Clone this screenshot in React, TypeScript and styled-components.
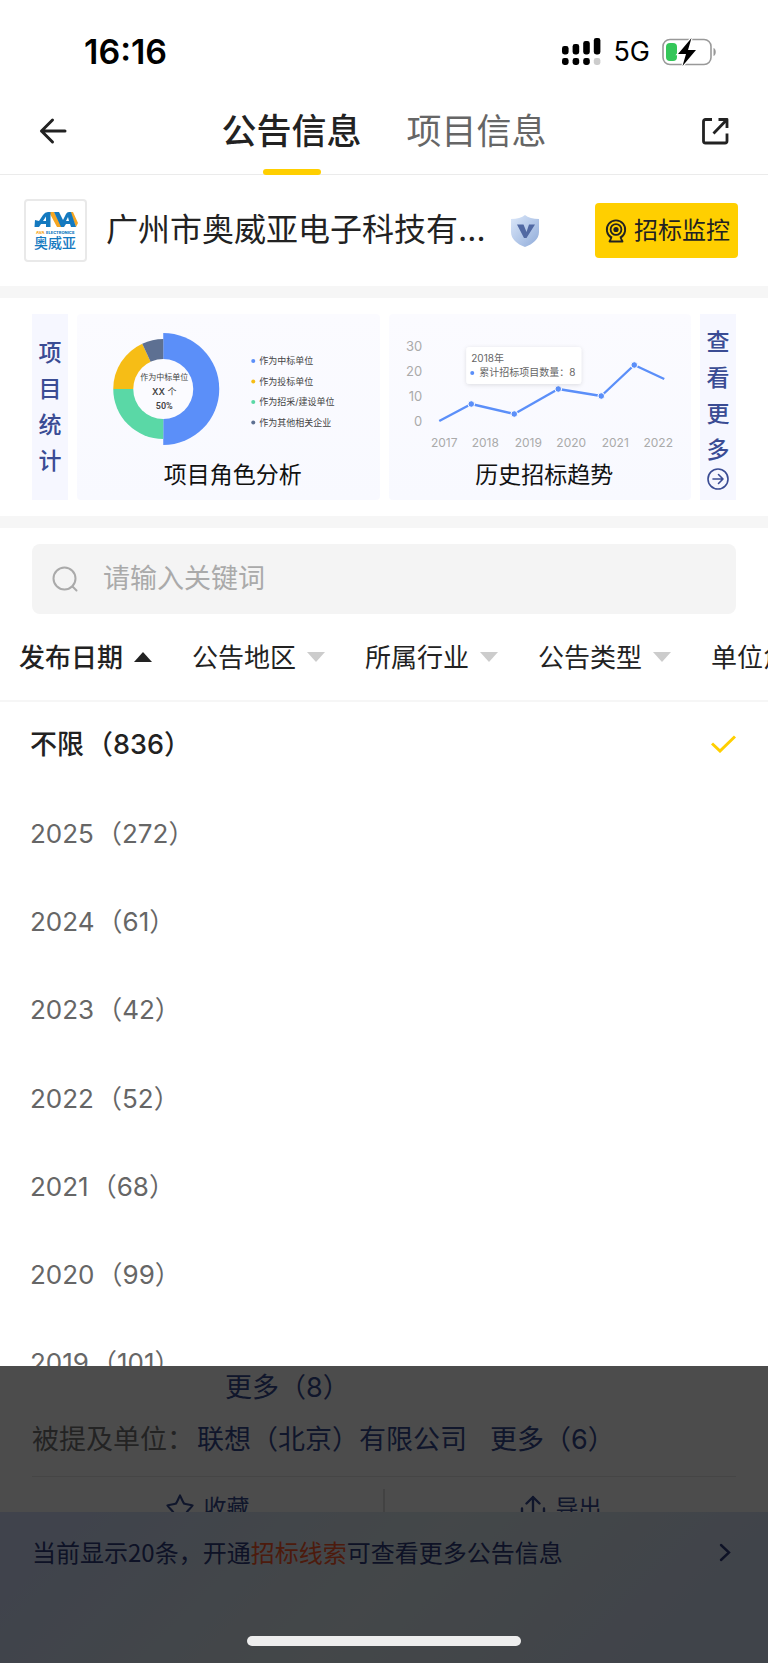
import React from "react";
import styled, { createGlobalStyle } from "styled-components";

const GlobalStyle = createGlobalStyle`
  *, *::before, *::after { box-sizing: border-box; }
  body {
    margin: 0;
    background: #fff;
    color: #222;
    font-family: Inter, "Noto Sans CJK SC", sans-serif;
  }
  button, input {
    font: inherit;
    color: inherit;
    border: 0;
    padding: 0;
    margin: 0;
    background: none;
  }
  button { cursor: pointer; }
  a { color: inherit; text-decoration: none; }
  svg { display: block; flex: none; }
`;

const Page = styled.div`
  display: flex;
  flex-direction: column;
  min-height: 100vh;
  overflow: hidden;
`;

const StatusBar = styled.div`
  display: flex;
  align-items: center;
  justify-content: space-between;
  height: 92px;
  padding: 12px 51px 0 84px;
  color: #000;
`;

const Clock = styled.time`
  font-size: 34px;
  font-weight: 600;
  line-height: 40px;
`;

const StatusIcons = styled.div`
  display: flex;
  align-items: center;
  gap: 12px;
  font-size: 27px;
  line-height: 32px;
`;

const NavBar = styled.header`
  display: flex;
  align-items: stretch;
  justify-content: space-between;
  height: 83px;
  padding: 0 37px;
  border-bottom: 1px solid #ebebeb;
`;

const IconButton = styled.button`
  display: flex;
  align-items: center;
  height: 78px;
`;

const Tabs = styled.nav`
  display: flex;
  gap: 45px;
`;

const Tab = styled.button<{ $active?: boolean }>`
  position: relative;
  height: 78px;
  font-size: 35px;
  line-height: 78px;
  font-weight: ${(p) => (p.$active ? 500 : 400)};
  color: ${(p) => (p.$active ? "#222" : "#666")};

  &::after {
    content: "";
    display: ${(p) => (p.$active ? "block" : "none")};
    position: absolute;
    left: 50%;
    bottom: -5px;
    width: 58px;
    height: 6px;
    margin-left: -28px;
    border-radius: 3px;
    background: #ffcf00;
  }
`;

const CompanyRow = styled.section`
  display: flex;
  align-items: center;
  height: 111px;
  padding: 0 30px 0 24px;
`;

const Logo = styled.div`
  flex: none;
  border: 2px solid #e9e9e9;
  border-radius: 4px;
`;

const CompanyName = styled.h1`
  flex: 1;
  max-width: 384px;
  margin: 0 21px 0 19px;
  padding-bottom: 2px;
  font-size: 32px;
  line-height: 44px;
  font-weight: 400;
  white-space: nowrap;
  overflow: hidden;
  text-overflow: ellipsis;
`;

const MonitorButton = styled.button`
  display: flex;
  align-items: center;
  gap: 7px;
  height: 55px;
  margin-left: auto;
  padding: 0 8px 0 10px;
  border-radius: 4px;
  background: #ffcf00;
  font-size: 24px;
  line-height: 52px;
  white-space: nowrap;
`;

const Band = styled.div`
  height: 12px;
  background: #f6f6f6;
`;

const Stats = styled.section`
  display: flex;
  gap: 9px;
  height: 218px;
  padding: 16px 32px;
`;

const SideColumn = styled.div`
  display: flex;
  flex-direction: column;
  align-items: center;
  justify-content: center;
  flex: none;
  width: 36px;
  padding: 0 6px;
  background: #f6f7ff;
  color: #3a4c94;
  font-size: 23px;
  font-weight: 500;
  line-height: 36px;
  text-align: center;
`;

const MoreLink = styled(SideColumn).attrs({ as: "a" })<{ href: string }>``;

const ChartCard = styled.figure`
  display: flex;
  flex-direction: column;
  flex: 1;
  min-width: 0;
  margin: 0;
  border-radius: 4px;
  background: linear-gradient(#fbfbff, #f8f9ff);

  svg { width: 100%; height: 140px; }
`;

const ChartTitle = styled.figcaption`
  padding-left: 9px;
  color: #111;
  font-size: 23px;
  line-height: 42px;
  text-align: center;
`;

const SearchBox = styled.label`
  display: flex;
  align-items: center;
  gap: 25px;
  height: 70px;
  margin: 16px 32px 0;
  padding: 0 20px;
  border-radius: 8px;
  background: #f4f4f4;
`;

const SearchInput = styled.input`
  flex: 1;
  min-width: 0;
  height: 40px;
  padding-bottom: 2px;
  font-size: 27px;
  outline: none;

  &::placeholder { color: #aaa; opacity: 1; }
`;

const FilterBar = styled.nav`
  display: flex;
  gap: 40px;
  height: 88px;
  padding-left: 19px;
  border-bottom: 2px solid #f6f6f6;
  overflow: hidden;
`;

const FilterButton = styled.button<{ $open?: boolean }>`
  display: flex;
  align-items: center;
  flex: none;
  gap: 11px;
  font-size: 26px;
  font-weight: ${(p) => (p.$open ? 500 : 400)};
`;

const FilterName = styled.span`
  padding-bottom: 4px;
`;

const Caret = styled.span<{ $up?: boolean }>`
  width: 0;
  height: 0;
  border: 9px solid transparent;
  border-width: ${(p) => (p.$up ? "0 9px 10px" : "10px 9px 0")};
  border-bottom-color: ${(p) => (p.$up ? "#222" : "transparent")};
  border-top-color: ${(p) => (p.$up ? "transparent" : "#ccc")};
`;

const DropPanel = styled.div`
  height: 40vh;
  margin-top: -1px;
  overflow: hidden;
`;

const OptionList = styled.ul`
  display: flex;
  flex-direction: column;
  min-height: 708px;
  margin: 0;
  padding: 0;
  list-style: none;
`;

const OptionItem = styled.li`
  display: flex;
  flex: 1;
`;

const OptionButton = styled.button<{ $selected?: boolean }>`
  display: flex;
  align-items: center;
  justify-content: space-between;
  flex: 1;
  padding: 0 32px 4px 30px;
  font-size: ${(p) => (p.$selected ? "27px" : "26px")};
  font-weight: ${(p) => (p.$selected ? 500 : 400)};
  color: ${(p) => (p.$selected ? "#222" : "#666")};
`;

const OptionText = styled.span`
  padding-bottom: 4px;
`;

const Count = styled.span`
  margin-left: 2px;
`;

const Behind = styled.section`
  position: relative;
  display: flex;
  flex-direction: column;
  flex: 1;
`;

const Mask = styled.div`
  position: absolute;
  inset: 0;
  background: rgba(0, 0, 0, 0.7);
`;

const Notice = styled.article`
  height: 146px;
  padding: 0 32px;
  overflow: hidden;
  font-size: 27px;
  line-height: 52px;
`;

const NoticeLine = styled.p<{ $indent?: boolean }>`
  display: flex;
  margin: 0;
  padding-left: ${(p) => (p.$indent ? "190px" : "0")};
  margin-top: ${(p) => (p.$indent ? "-4px" : "0")};
  color: #777;
  white-space: nowrap;
`;

const UnitLink = styled.a`
  margin: 0 20px 0 3px;
  color: #364a92;
`;

const NoticeActions = styled.div`
  display: flex;
  align-items: center;
  height: 62px;
  margin-top: 10px;
  border-top: 1px solid #e8e8e8;
`;

const NoticeAction = styled.button`
  display: flex;
  align-items: center;
  justify-content: center;
  flex: 1;
  gap: 10px;
  height: 38px;
  color: #364a92;
  font-size: 23px;

  & + & { border-left: 2px solid #ddd; }
`;

const Banner = styled.a`
  display: flex;
  flex: 1;
  align-items: flex-start;
  justify-content: space-between;
  min-height: 150px;
  padding: 21px 34px 21px 32px;
  background: linear-gradient(135deg, #d6e2fd 10%, #e3eff3 50%, #d8e3f8 85%);
  color: #2f3d80;
  font-family: "Noto Sans CJK SC", sans-serif;
  font-size: 24px;
  line-height: 38px;
  white-space: nowrap;

  svg { margin-top: 10px; }
`;

const Accent = styled.em`
  font-style: normal;
  color: #ff5a2e;
`;

const HomeIndicator = styled.div`
  position: absolute;
  left: 50%;
  bottom: 17px;
  width: 274px;
  height: 10px;
  margin-left: -137px;
  border-radius: 5px;
  background: #eee;
`;

const cjk = 'Inter, "Noto Sans CJK SC", sans-serif';

const SignalIcon = () => (
  <svg width="39" height="28" viewBox="0 0 39 28" aria-label="信号">
    {[8, 6, 3, 0].map((top, i) => (
      <g key={top}>
        <rect x={i * 10.6} y={top} width="6.6" height={16.5 - top} rx="2.4" fill="#000" />
        <rect x={i * 10.6} y="20" width="6.6" height="7" rx="2.4" fill={i === 3 ? "#ccc" : "#000"} />
      </g>
    ))}
  </svg>
);

const BatteryIcon = () => (
  <svg width="55" height="28" viewBox="0 0 55 28" aria-label="充电中">
    <rect x="1" y="1.500" width="48" height="25" rx="7" fill="#fff" stroke="#999" strokeWidth="1.6" />
    <rect x="4" y="5" width="11" height="18" rx="4" fill="#34c759" />
    <path d="M51.500 10c3 1 3 7 0 8z" fill="#999" />
    <path d="M29.500 0 16 16h8l-3.500 12L34 12h-8z" fill="#000" stroke="#fff" strokeWidth="2.4" paintOrder="stroke" />
  </svg>
);

const BackIcon = () => (
  <svg width="30" height="30" viewBox="0 0 30 30" fill="none" stroke="#222" strokeWidth="3" strokeLinecap="round" strokeLinejoin="round">
    <path d="M28 15H4.500M15.500 4 4.500 15l11 11" />
  </svg>
);

const ShareIcon = () => (
  <svg width="30" height="30" viewBox="0 0 30 30" fill="none" stroke="#222" strokeWidth="2.8" strokeLinejoin="round">
    <path d="M11 3.500H4.500a2 2 0 0 0-2 2V25a2 2 0 0 0 2 2H24a2 2 0 0 0 2-2v-7.500" />
    <path d="M17.500 3.500H26V12M26 3.500 12.500 17.500" />
  </svg>
);

const CompanyLogo = () => (
  <svg width="59" height="59" viewBox="0 0 59 59" role="img" aria-label="奥威亚">
    <path d="M23 11h5l8 15h-5z M44 11h3l5 11-2 4z" fill="#f5a623" />
    <path d="M9 19l4 1 4-6q2-3 5-3h2.500v15H20v-3h-5l-2 3H8.500z M20 20v-4.500l-3 4.500z" fillRule="evenodd" fill="#1479bf" />
    <path d="M28 11h5l4 8 3-6q1-2 3-2h2l5 15h-5l-1-3h-4l-2 3h-3z M43 20l-1-4-2 4z" fillRule="evenodd" fill="#1479bf" />
    <text x="10" y="33" fontSize="4" fontWeight="800" fontFamily={cjk} fill="#f5a623">AVA</text>
    <text x="20" y="33" fontSize="4" fontWeight="800" fontFamily={cjk} fill="#1479bf">ELECTRONICS</text>
    <text x="8" y="47" fontSize="14" fontWeight="500" fontFamily={cjk} fill="#1479bf">奥威亚</text>
  </svg>
);

const ShieldIcon = () => (
  <svg width="28" height="32" viewBox="0 0 28 32" role="img" aria-label="认证">
    <defs>
      <linearGradient id="shield" x1="0" y1="0" x2="1" y2="1">
        <stop offset="0" stopColor="#dce8fa" />
        <stop offset="1" stopColor="#8fabd9" />
      </linearGradient>
    </defs>
    <path d="M14 0c3 2.500 8 4 14 4v13c0 7-6 12-14 15C6 29 0 24 0 17V4c6 0 11-1.500 14-4z" fill="url(#shield)" />
    <path d="M6 9.500h6.500l3 7.500 2.500-7.500h6L15.500 23H13z" fill="#5169a3" />
  </svg>
);

const WebcamIcon = () => (
  <svg width="22" height="24" viewBox="0 0 22 24" fill="none" stroke="#222" strokeWidth="1.800">
    <path d="M6.500 18.600a9.200 9.200 0 1 1 9 0" />
    <circle cx="11" cy="10.500" r="5.400" />
    <circle cx="11" cy="10.500" r="2.600" fill="#222" stroke="none" />
    <path d="M6.500 17.500c0 2-1 3-2 5h13c-1-2-2-3-2-5" strokeLinejoin="round" />
  </svg>
);

const CircleArrow = () => (
  <svg width="22" height="22" viewBox="0 0 22 22" fill="none" stroke="#3a4c94" strokeWidth="1.600" strokeLinecap="round" strokeLinejoin="round">
    <circle cx="11" cy="11" r="10" />
    <path d="M6 11h10M11.500 6.500 16 11l-4.500 4.500" />
  </svg>
);

const SearchIcon = () => (
  <svg width="26" height="26" viewBox="0 0 26 26" fill="none" stroke="#aaa" strokeWidth="2" strokeLinecap="round">
    <circle cx="12.500" cy="12.500" r="11" />
    <path d="m20.500 20.500 4 4" />
  </svg>
);

const CheckIcon = () => (
  <svg width="25" height="18" viewBox="0 0 25 18" fill="none" stroke="#ffcf00" strokeWidth="3">
    <path d="m1 8.500 8 7.500L24 1.500" />
  </svg>
);

const StarIcon = () => (
  <svg width="28" height="28" viewBox="0 0 28 28" fill="none" stroke="#364a92" strokeWidth="2.200" strokeLinejoin="round">
    <path d="M14 1.500 C15 3 16.500 7.500 18 9.500 C20 10.500 24 10.500 26.500 11.500 C25 14 22 16 20.500 18.500 C20.500 21 21.500 24 21 26 C18.500 25.500 16 23.500 14 23 C12 23.500 9.500 25.500 7 26 C6.500 24 7.500 21 7.500 18.500 C6 16 3 14 1.500 11.500 C4 10.500 8 10.500 10 9.500 C11.500 7.500 13 3 14 1.500z" />
  </svg>
);

const ExportIcon = () => (
  <svg width="26" height="26" viewBox="0 0 26 26" fill="none" stroke="#364a92" strokeWidth="2.400" strokeLinecap="round" strokeLinejoin="round">
    <path d="M13 20V2M6.500 8.500 13 2l6.500 6.500M2 13.500V24h22V13.500" />
  </svg>
);

const ChevronIcon = () => (
  <svg width="18" height="20" viewBox="0 0 18 20" fill="none" stroke="#2f3d80" strokeWidth="2.400" strokeLinecap="round">
    <path d="m5 2 8 7.500L5 17" />
  </svg>
);

const ROLES = [
  { label: "作为中标单位", color: "#5b8ff9" },
  { label: "作为投标单位", color: "#f6bd16" },
  { label: "作为招采/建设单位", color: "#5ad8a6" },
  { label: "作为其他相关企业", color: "#5d7092" },
];

const RoleChart = () => (
  <svg viewBox="0 0 302 140" fontFamily={cjk} fill="#444">
    <path d="M86 19a56 56 0 0 1 0 112z" fill="#5b8ff9" />
    <path d="M86 125a50 50 0 0 1-50-50h50z" fill="#5ad8a6" />
    <path d="M36 75a50 50 0 0 1 29-45.300L86 75z" fill="#f6bd16" />
    <path d="M65 29.700A50 50 0 0 1 86 25v50z" fill="#5d7092" />
    <circle cx="86" cy="75" r="30" fill="#fbfbff" />
    <g textAnchor="middle">
      <text x="87" y="66" fontSize="8">作为中标单位</text>
      <text x="87" y="81" fontSize="9"><tspan fontWeight="600">XX</tspan> 个</text>
      <text x="87" y="95" fontSize="9" fontWeight="600" fontFamily="Roboto, sans-serif">50%</text>
    </g>
    {ROLES.map((role, i) => (
      <g key={role.label}>
        <circle cx="176" cy={47 + i * 20.500} r="2" fill={role.color} />
        <text x="182" y={50 + i * 20.500} fontSize="9">{role.label}</text>
      </g>
    ))}
  </svg>
);

const YEARS = [
  { year: 2017, x: 55 },
  { year: 2018, x: 96 },
  { year: 2019, x: 139 },
  { year: 2020, x: 182 },
  { year: 2021, x: 226 },
  { year: 2022, x: 269 },
];

const TREND = [[50, 107], [82, 90], [125, 100], [169, 75], [212, 82], [245, 51], [275, 65]];

const TrendChart = () => (
  <svg viewBox="0 0 302 140" fontFamily={cjk}>
    <defs>
      <filter id="tipShadow" x="-10%" y="-20%" width="120%" height="150%">
        <feDropShadow dx="0" dy="1" stdDeviation="2" floodColor="#000" floodOpacity="0.12" />
      </filter>
    </defs>
    <g fill="#aaa" fontSize="13">
      {[30, 20, 10, 0].map((v, i) => (
        <text key={v} x="33" y={37 + i * 25} textAnchor="end">{v}</text>
      ))}
    </g>
    <g fill="#aaa" fontSize="12">
      {YEARS.map(({ year, x }) => (
        <text key={year} x={x} y="133" textAnchor="middle">{year}</text>
      ))}
    </g>
    <polyline points={TREND.map((p) => p.join(",")).join(" ")} fill="none" stroke="#5b8ff9" strokeWidth="2.400" strokeLinejoin="round" />
    {TREND.slice(1, 6).map(([x, y]) => (
      <circle key={x} cx={x} cy={y} r="3.300" fill="#5b8ff9" stroke="#fff" strokeWidth="1" />
    ))}
    <rect x="77" y="33" width="115" height="37" rx="3" fill="#fff" filter="url(#tipShadow)" />
    <circle cx="83" cy="59" r="2" fill="#5b8ff9" />
    <g fill="#666" fontSize="10">
      <text x="82" y="48">2018年</text>
      <text x="90" y="62">累计招标项目数量：8</text>
    </g>
  </svg>
);

const FILTERS = ["发布日期", "公告地区", "所属行业", "公告类型", "单位角色"];

const OPTIONS = [
  ["不限", 836],
  ["2025", 272],
  ["2024", 61],
  ["2023", 42],
  ["2022", 52],
  ["2021", 68],
  ["2020", 99],
  ["2019", 101],
];

export default function App() {
  return (
    <>
      <GlobalStyle />
      <Page>
        <StatusBar>
          <Clock>16:16</Clock>
          <StatusIcons>
            <SignalIcon />
            <span>5G</span>
            <BatteryIcon />
          </StatusIcons>
        </StatusBar>
        <NavBar>
          <IconButton aria-label="返回"><BackIcon /></IconButton>
          <Tabs>
            <Tab $active>公告信息</Tab>
            <Tab>项目信息</Tab>
          </Tabs>
          <IconButton aria-label="分享"><ShareIcon /></IconButton>
        </NavBar>
        <CompanyRow>
          <Logo><CompanyLogo /></Logo>
          <CompanyName>广州市奥威亚电子科技有限公司</CompanyName>
          <ShieldIcon />
          <MonitorButton><WebcamIcon />招标监控</MonitorButton>
        </CompanyRow>
        <Band />
        <Stats>
          <SideColumn>项目统计</SideColumn>
          <ChartCard>
            <RoleChart />
            <ChartTitle>项目角色分析</ChartTitle>
          </ChartCard>
          <ChartCard>
            <TrendChart />
            <ChartTitle>历史招标趋势</ChartTitle>
          </ChartCard>
          <MoreLink href="#more">查看更多<CircleArrow /></MoreLink>
        </Stats>
        <Band />
        <SearchBox>
          <SearchIcon />
          <SearchInput type="text" aria-label="关键词" placeholder="请输入关键词" />
        </SearchBox>
        <FilterBar>
          {FILTERS.map((name, i) => (
            <FilterButton key={name} $open={i === 0} aria-expanded={i === 0}>
              <FilterName>{name}</FilterName>
              <Caret $up={i === 0} />
            </FilterButton>
          ))}
        </FilterBar>
        <DropPanel>
          <OptionList>
            {OPTIONS.map(([label, count], i) => (
              <OptionItem key={label}>
                <OptionButton $selected={i === 0}>
                  <OptionText>{label}<Count>（{count}）</Count></OptionText>
                  {i === 0 && <CheckIcon />}
                </OptionButton>
              </OptionItem>
            ))}
          </OptionList>
        </DropPanel>
        <Behind>
          <Notice>
            <NoticeLine $indent><UnitLink href="#units">更多（8）</UnitLink></NoticeLine>
            <NoticeLine>
              被提及单位：
              <UnitLink href="#lenovo">联想（北京）有限公司</UnitLink>
              <UnitLink href="#mentioned">更多（6）</UnitLink>
            </NoticeLine>
            <NoticeActions>
              <NoticeAction><StarIcon />收藏</NoticeAction>
              <NoticeAction><ExportIcon />导出</NoticeAction>
            </NoticeActions>
          </Notice>
          <Banner href="#upgrade">
            <span>当前显示20条，开通<Accent>招标线索</Accent>可查看更多公告信息</span>
            <ChevronIcon />
          </Banner>
          <Mask />
          <HomeIndicator />
        </Behind>
      </Page>
    </>
  );
}
